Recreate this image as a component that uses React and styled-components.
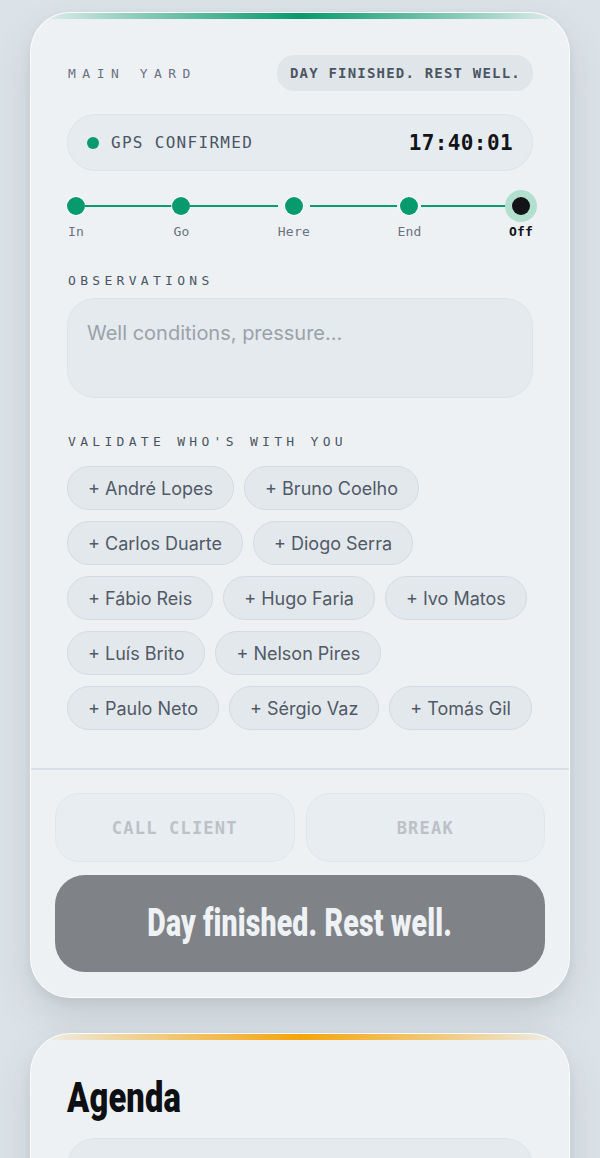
import React from "react";
import styled, { createGlobalStyle } from "styled-components";

const Global = createGlobalStyle`
  * { box-sizing: border-box; }
  html, body { margin: 0; padding: 0; background: #dce3e8; }
  body { font-family: Inter, "Noto Sans", sans-serif; }
`;

const MONO = `"DejaVu Sans Mono", "Liberation Mono", monospace`;

const Page = styled.div`
  display: flex;
  flex-direction: column;
  align-items: center;
  gap: 35px;
  padding: 12px 30px 40px;
`;

const Card = styled.div`
  position: relative;
  width: 540px;
  background: #edf1f4;
  border-radius: 40px;
  overflow: hidden;
  border: 1px solid rgba(255, 255, 255, 0.75);
  box-shadow: 0 18px 40px rgba(40, 55, 70, 0.14), 0 4px 10px rgba(40, 55, 70, 0.06);
  &::before {
    content: "";
    position: absolute;
    left: 0;
    right: 0;
    top: 0;
    height: 6px;
    background: linear-gradient(90deg, rgba(255,255,255,0) 0%, ${p => p.$accent}55 15%, ${p => p.$accent} 50%, ${p => p.$accent}55 85%, rgba(255,255,255,0) 100%);
  }
`;

const Main = styled.div`
  display: flex;
  flex-direction: column;
  padding: 42px 36px 38px;
`;

const Header = styled.div`
  display: flex;
  align-items: center;
  justify-content: space-between;
  height: 36px;
`;

const Eyebrow = styled.div`
  font-family: ${MONO};
  font-size: 13px;
  letter-spacing: 6.5px;
  color: #6b7280;
  margin-left: 1px;
`;

const Badge = styled.div`
  height: 36px;
  padding: 0 12px 0 13px;
  display: flex;
  align-items: center;
  border-radius: 17px;
  background: #e0e5e9;
  font-family: ${MONO};
  font-weight: 700;
  font-size: 14px;
  letter-spacing: 1.2px;
  color: #4b5563;
`;

const GpsRow = styled.div`
  margin-top: 23px;
  height: 57px;
  border-radius: 29px;
  background: #e6ebef;
  border: 1px solid #dee3e7;
  display: flex;
  align-items: center;
  justify-content: space-between;
  padding: 0 19px 0 19px;
`;

const GpsLeft = styled.div`
  display: flex;
  align-items: center;
  gap: 12px;
`;

const Dot = styled.span`
  width: 12px;
  height: 12px;
  border-radius: 50%;
  background: #079a6c;
`;

const GpsText = styled.span`
  font-family: ${MONO};
  font-size: 16px;
  letter-spacing: 1.3px;
  color: #4b5563;
`;

const Clock = styled.span`
  font-family: ${MONO};
  font-size: 21px;
  font-weight: 700;
  letter-spacing: 0.4px;
  color: #111418;
`;

const Stepper = styled.div`
  margin-top: 26px;
  display: flex;
  align-items: flex-start;
`;

const Step = styled.div`
  display: flex;
  flex-direction: column;
  align-items: center;
  min-width: 18px;
`;

const StepDot = styled.span`
  width: 18px;
  height: 18px;
  border-radius: 50%;
  background: ${p => (p.$current ? "#121418" : "#079a6c")};
  box-shadow: ${p =>
    p.$current ? "0 0 0 7px #b3dfcf" : "0 0 0 1px rgba(255,255,255,0.8)"};
`;

const StepLabel = styled.span`
  margin-top: 9px;
  font-family: ${MONO};
  font-size: 13px;
  line-height: 16px;
  letter-spacing: 0.2px;
  font-weight: ${p => (p.$current ? 700 : 400)};
  color: ${p => (p.$current ? "#111418" : "#6b7280")};
`;

const Connector = styled.span`
  flex: 1;
  height: 2px;
  margin-top: 8px;
  background: #0a9c6e;
`;

const SectionLabel = styled.div`
  margin-top: ${p => p.$mt}px;
  font-family: ${MONO};
  font-size: 13px;
  line-height: 16px;
  letter-spacing: 4.3px;
  font-weight: 500;
  color: #4b5563;
  margin-left: 1px;
`;

const Notes = styled.textarea`
  margin-top: 9px;
  height: 100px;
  width: 100%;
  resize: none;
  border-radius: 28px;
  background: #e5eaee;
  border: 1px solid #dde3e7;
  padding: 20px 19px;
  font-family: Inter, sans-serif;
  font-size: 20px;
  line-height: 28px;
  color: #1f2937;
  outline: none;
  &::placeholder { color: #9aa1aa; }
`;

const Chips = styled.div`
  margin-top: 16px;
  display: flex;
  flex-wrap: wrap;
  gap: 11px 10px;
  max-width: 468px;
`;

const Chip = styled.button`
  height: 44px;
  padding: 0 20px;
  border-radius: 22px;
  background: #e3e8ed;
  border: 1.5px solid #d5dbe0;
  font-family: Inter, sans-serif;
  font-size: 18px;
  color: #515a66;
  white-space: nowrap;
  cursor: pointer;
`;

const Footer = styled.div`
  border-top: 2px solid #d9dfe4;
  padding: 23px 24px 25px;
  display: flex;
  flex-direction: column;
  gap: 13px;
`;

const ButtonRow = styled.div`
  display: grid;
  grid-template-columns: 1fr 1fr;
  gap: 11px;
`;

const GhostButton = styled.button`
  height: 69px;
  border-radius: 24px;
  background: #e8edf1;
  border: 1.5px solid #e1e6ea;
  font-family: ${MONO};
  font-weight: 700;
  font-size: 17px;
  letter-spacing: 1.2px;
  color: #bcc1c7;
`;

const BigButton = styled.button`
  height: 97px;
  border-radius: 30px;
  background: #7f8286;
  border: none;
  display: flex;
  align-items: center;
  justify-content: center;
  color: #eef2f5;
`;

const Condensed = styled.span`
  display: inline-block;
  font-family: Roboto, "Liberation Sans", sans-serif;
  font-weight: 900;
  font-size: ${p => p.$size}px;
  line-height: 1;
  letter-spacing: 0.2px;
  transform: scaleX(${p => p.$sx});
  transform-origin: ${p => p.$origin || "center"};
  white-space: nowrap;
`;

const AgendaBody = styled.div`
  display: flex;
  flex-direction: column;
  padding: 40px 36px 30px;
`;

const Title = styled.h2`
  margin: 0;
  color: #0d0f12;
  height: 46px;
  display: flex;
  align-items: center;
`;

const AgendaRow = styled.div`
  margin-top: 18px;
  height: 60px;
  border-radius: 28px;
  background: #e5eaee;
  border: 1px solid #dde3e7;
  display: flex;
  align-items: center;
  justify-content: space-between;
  padding: 0 20px;
`;

const AgendaText = styled.span`
  font-family: Inter, sans-serif;
  font-size: 18px;
  color: #4b5563;
`;

const AgendaTime = styled.span`
  font-family: ${MONO};
  font-weight: 700;
  font-size: 21px;
  color: #111418;
`;

const steps = ["In", "Go", "Here", "End", "Off"];
const people = [
  "André Lopes", "Bruno Coelho", "Carlos Duarte", "Diogo Serra", "Fábio Reis",
  "Hugo Faria", "Ivo Matos", "Luís Brito", "Nelson Pires", "Paulo Neto",
  "Sérgio Vaz", "Tomás Gil",
];

export default function App() {
  return (
    <>
      <Global />
      <Page>
        <Card $accent="#079a6c">
          <Main>
            <Header>
              <Eyebrow>MAIN YARD</Eyebrow>
              <Badge>DAY FINISHED. REST WELL.</Badge>
            </Header>
            <GpsRow>
              <GpsLeft>
                <Dot />
                <GpsText>GPS CONFIRMED</GpsText>
              </GpsLeft>
              <Clock>17:40:01</Clock>
            </GpsRow>
            <Stepper>
              {steps.map((s, i) => (
                <React.Fragment key={s}>
                  {i > 0 && <Connector />}
                  <Step>
                    <StepDot $current={i === steps.length - 1} />
                    <StepLabel $current={i === steps.length - 1}>{s}</StepLabel>
                  </Step>
                </React.Fragment>
              ))}
            </Stepper>
            <SectionLabel $mt={33}>OBSERVATIONS</SectionLabel>
            <Notes placeholder="Well conditions, pressure..." />
            <SectionLabel $mt={36}>VALIDATE WHO'S WITH YOU</SectionLabel>
            <Chips>
              {people.map(p => (
                <Chip key={p}>+ {p}</Chip>
              ))}
            </Chips>
          </Main>
          <Footer>
            <ButtonRow>
              <GhostButton>CALL CLIENT</GhostButton>
              <GhostButton>BREAK</GhostButton>
            </ButtonRow>
            <BigButton>
              <Condensed $size={39} $sx={0.73}>Day finished. Rest well.</Condensed>
            </BigButton>
          </Footer>
        </Card>
        <Card $accent="#f5a50b">
          <AgendaBody>
            <Title>
              <Condensed $size={43} $sx={0.76} $origin="left">Agenda</Condensed>
            </Title>
            <AgendaRow>
              <AgendaText>Site inspection</AgendaText>
              <AgendaTime>15:55</AgendaTime>
            </AgendaRow>
          </AgendaBody>
        </Card>
      </Page>
    </>
  );
}
